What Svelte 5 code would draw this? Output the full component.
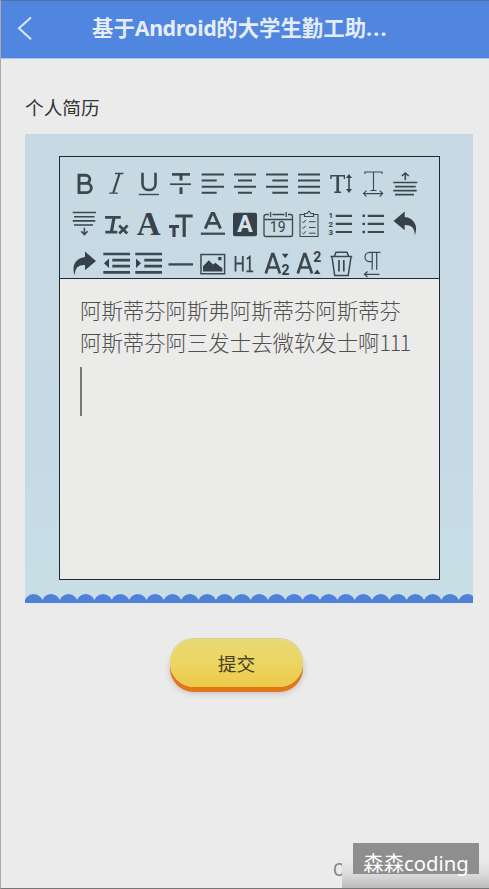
<script>
  const latin = 'Roboto, "Liberation Sans", sans-serif';
  const serif = '"Liberation Serif", serif';
  const scallops = Array.from({ length: 26 }, (_, i) => i * 17.35);

  // Each tool is a list of strokes (s), fills (f) and glyphs (t) on a 32x40 cell.
  const s = (d, w = 2) => ({ kind: 's', d, w });
  const f = (d) => ({ kind: 'f', d });
  const t = (text, x, y, size, o = {}) => ({ kind: 't', text, x, y, size, ...o });

  const tools = [
    { name: 'bold', p: [s('M11 11.2h6.700a4.100 4.100 0 0 1 0 8.200H11zM11 19.400h7.700a4.600 4.600 0 0 1 0 9.200H11z', 2.900)] },
    { name: 'italic', p: [s('M19.400 10l-6.200 19', 2.200), s('M15 9.500h8.400M9.300 29.200h8.500', 1.300)] },
    { name: 'underline', p: [s('M10.500 8.700v11c0 8.400 13 8.400 13 0V8.700', 2.600), s('M6.800 30.500H27', 1.400)] },
    { name: 'strike', p: [s('M8 10.400h18', 2.600), s('M17 10v6.600M17 23.300V30', 3), s('M6 20.200h21', 1.700)] },
    { name: 'left', p: [s('M5.700 10.500H28M5.700 16.600h15M5.700 22.700H28M5.700 28.800h15')] },
    { name: 'center', p: [s('M6 10.500h22M10 16.600h14M6 22.700h22M10 28.800h14')] },
    { name: 'right', p: [s('M6 10.500h22M12.300 16.600H28M6 22.700h22M12.300 28.800H28')] },
    { name: 'justify', p: [s('M6 10.500h22M6 16.600h22M6 22.700h22M6 28.800h22')] },
    { name: 'line-height', p: [s('M7 15v-3.300h13.400V15M10.300 28.300h6.800', 1.400), s('M13.700 12v16', 2.700), s('M25 12v15', 1.600), f('M22 14l3-4 3 4zM22 25l3 4 3-4z')] },
    { name: 'letter-spacing', p: [s('M9 10V8h17v2M17.500 8v18.500M14.500 26.500h6M7.500 29.600h19M10.500 26.600l-3 3 3 3M23.700 26.600l3 3-3 3', 1.100)] },
    { name: 'space-top', p: [s('M5.300 18.500h24M7 22.600h20.700M5.300 26.600h23.400M7 30.700h19', 1.700), s('M17.300 16V9.500M13.800 12l3.500-3 3.500 3', 1.600)] },

    { name: 'space-bottom', p: [s('M4.700 8.500H28M6 12.700h20.500M4.700 16.900h22.600M6 21h19', 1.600), s('M16.400 23.700v6.700M13.200 27.200l3.200 3.400 3.200-3.400', 1.500)] },
    { name: 'clear', p: [s('M5 13.300h15.700M5.300 28.100h12', 2.800), s('M14 13.500l-2.600 14.500', 3.200), s('M19.200 21.500l8 8M27.600 21.500l-8.400 8', 2.700)] },
    { name: 'font', p: [t('A', 16.700, 31, 33, { fam: serif, bold: true })] },
    { name: 'size', p: [s('M11.200 12h17.500M5 22.500h10', 3), s('M20.200 12v21M10 22.500V33', 3.200)] },
    { name: 'color', p: [s('M9.200 24.700L16 9.500h1.700l6.800 15.200M12 19.400h9.800', 2.900), s('M4.800 29.700H29', 2.200)] },
    { name: 'background', p: [f('M7 8.700h20a2 2 0 0 1 2 2v19.500a2 2 0 0 1-2 2H7a2 2 0 0 1-2-2V10.700a2 2 0 0 1 2-2z'), t('A', 16.900, 28, 23, { fam: latin, bold: true, light: true })] },
    { name: 'date', p: [s('M6.500 10.500h2.500M12.500 10.500h12M28 10.500h2.500q2 0 2 2V30.500q0 2-2 2H6q-2 0-2-2V12.500q0-2 2.500-2M4 15.500h28.500M10.600 8v5M26.200 8v5', 1.300), t('19', 17.700, 28.300, 14, { fam: latin })] },
    { name: 'check-list', p: [s('M12.500 10.500H8v22h18v-22h-4.500M12.500 12.500V9.500h2.500l2-2.300 2 2.300h2.500v3z', 1.100), s('M10.300 17.500l1.300 1.200 2.200-2.700M10.300 23.200l1.300 1.200 2.200-2.700M10.300 28.800l1.300 1.200 2.200-2.700M17 17.700h6.500M17 23.500h6.500M17 29.200h6.500', 1)] },
    { name: 'ordered', p: [s('M11.700 11.800H28M11.700 19.900H28M11.700 28H28', 2.200), t('1', 6.700, 14, 8, { fam: latin, bold: true }), t('2', 6.700, 22.700, 8, { fam: latin, bold: true }), t('3', 6.700, 31, 8, { fam: latin, bold: true })] },
    { name: 'bullet', p: [s('M11.700 11.800H28M11.700 19.900H28M11.700 28H28', 2.200), s('M6.500 11.800H9M6.500 19.900H9M6.500 28H9', 2.400)] },
    { name: 'undo', p: [f('M5.500 17L16.700 7.500v5.400C25 13.600 31 21 26.800 31.500 27 23.500 23 20.800 16.700 20.900v5.400z')] },

    { name: 'redo', p: [f('M28 17L17 7.500v5.400C8.500 13.600 2.800 21 6.800 31.500 6.800 23.500 10.700 20.800 17 20.900v5.400z')] },
    { name: 'outdent', p: [s('M3.300 10H30M12.300 16.200H30M12.300 22.200H30M3.300 28.400H30', 2.700), f('M9 14.500v9.400L4 19.200z')] },
    { name: 'indent', p: [s('M3.300 10H30M12.300 16.200H30M12.300 22.200H30M3.300 28.400H30', 2.700), f('M4 14.500v9.400l5-4.700z')] },
    { name: 'divider', p: [s('M4.500 20.400H29', 2.300)] },
    { name: 'image', p: [s('M5 10.500h23.600v19.200H5z', 1.500), f('M7 27.500v-5.200l5.800-6 4.300 4.200 2.300-1.800 7 5.500v3.300zM22.200 13h3.300v3.200h-3.300z')] },
    { name: 'heading', p: [s('M7.500 12v15.500M14.800 12v15.500M7.500 19.500h7.300M18.800 15l3-2.300V27M18.500 27.300h6.700', 1.800)] },
    { name: 'subscript', p: [s('M5.800 29.500L12.300 10h1l6.700 19.500M8 23.500h9.700', 2.700), f('M21.800 9.700h6.700l-3.300 4.600z'), t('2', 25.500, 31, 14, { fam: latin, bold: true })] },
    { name: 'superscript', p: [s('M5.800 29.500L12.300 10h1l6.700 19.500M8 23.500h9.700', 2.700), f('M21.800 30h6.700l-3.300-4.600z'), t('2', 25.300, 17.800, 14, { fam: latin, bold: true })] },
    { name: 'trash', p: [s('M6.500 12.500h21.700M10.500 12l1.500-3.700h11l1.500 3.700M8 13l2.700 18.500h13.500L27 13', 1.500), s('M15 16v11.500M19.800 16v11.500', 1.700)] },
    { name: 'direction', p: [s('M24.500 8.300H13.700a4.700 4.700 0 0 0 0 9.400h2.500M16.200 8.300v17.500M20.700 8.300v17.500M8.500 30.300h15M11.500 27.500l-3 2.800 3 2.800', 1.200)] }
  ];
</script>

<div class="page">
  <header>
    <svg class="back" width="16" height="26" viewBox="0 0 16 26"><path d="M14 2.500L2 13.300l12 10.900" /></svg>
    <h1>基于<span class="en">Android</span>的大学生勤工助<span class="dots">...</span></h1>
  </header>

  <main>
    <div class="label">个人简历</div>
    <section class="card">
      <div class="editor">
        <div class="toolbar">
          {#each tools as tool (tool.name)}
            <svg class="tool" width="32" height="40" viewBox="0 0 32 40" aria-label={tool.name}>
              {#each tool.p as p}
                {#if p.kind === 's'}
                  <path class="stroke" d={p.d} stroke-width={p.w} />
                {:else if p.kind === 'f'}
                  <path class="fill" d={p.d} />
                {:else}
                  <text class:light={p.light} x={p.x} y={p.y} font-size={p.size} font-family={p.fam} font-weight={p.bold ? 700 : 400} text-anchor="middle">{p.text}</text>
                {/if}
              {/each}
            </svg>
          {/each}
        </div>
        <div class="content">
          <p>阿斯蒂芬阿斯弗阿斯蒂芬阿斯蒂芬</p>
          <p>阿斯蒂芬阿三发士去微软发士啊<span class="digits">111</span></p>
          <span class="caret"></span>
        </div>
      </div>
      <svg class="wave" width="448" height="9" viewBox="0 0 448 9">
        <rect y="6" width="448" height="3" />
        {#each scallops as x}
          <circle cx={x + 8.7} cy="9.400" r="9.300" />
        {/each}
      </svg>
    </section>
    <button>提交</button>
  </main>

  <span class="credit">C</span>
  <div class="shade"></div>
  <div class="watermark">森森coding</div>
</div>

<style>
  .page {
    position: relative;
    box-sizing: border-box;
    width: 489px;
    height: 889px;
    overflow: hidden;
    background: #ebebeb;
    border-left: 1px solid #aaa;
    border-bottom: 1px solid #777;
    font-family: "Noto Sans", "Noto Sans CJK SC", sans-serif;
  }
  header {
    box-sizing: border-box;
    height: 58px;
    display: flex;
    align-items: center;
    padding: 0 0 4px 16px;
    background: #5085e0;
    border-top: 1px solid #4d70ad;
    box-shadow: 0 1px #a9c6ee;
  }
  .back path {
    fill: none;
    stroke: #dce8f8;
    stroke-width: 2;
  }
  h1 {
    margin: 0 0 0 59px;
    font: 700 21.400px/30px "Noto Sans", "Noto Sans CJK SC", sans-serif;
    color: #e4ecf5;
    white-space: nowrap;
  }
  .en {
    letter-spacing: -0.450px;
  }
  .dots {
    letter-spacing: 1.200px;
  }
  main {
    display: flex;
    flex-direction: column;
    padding: 35px 16px 0 24px;
  }
  .label {
    height: 41px;
    font: 18.700px/27px "Noto Sans CJK SC", sans-serif;
    color: #333;
  }
  .card {
    box-sizing: border-box;
    width: 448px;
    height: 469px;
    padding-top: 22px;
    display: flex;
    flex-direction: column;
    justify-content: space-between;
    background: linear-gradient(#c7dae4, #c6dae5 70%, #c8dfe5);
  }
  .editor {
    box-sizing: border-box;
    width: 381px;
    height: 424px;
    margin-left: 34px;
    border: 1.500px solid #202b31;
    display: flex;
    flex-direction: column;
  }
  .toolbar {
    box-sizing: border-box;
    height: 122px;
    padding: 7px 0 0 8px;
    display: flex;
    flex-wrap: wrap;
    align-content: flex-start;
    border-bottom: 1px solid #202b31;
  }
  .tool {
    display: block;
    overflow: visible;
  }
  .stroke {
    fill: none;
    stroke: #3c474f;
  }
  .fill, text {
    fill: #374149;
  }
  text.light {
    fill: #d4e3ea;
  }
  .content {
    flex: 1;
    padding: 15px 20px;
    background: #ebebe9;
    font: 300 21.400px/32px "Noto Sans CJK SC", sans-serif;
    color: #505050;
  }
  p {
    margin: 0;
    white-space: nowrap;
  }
  .digits {
    letter-spacing: -1.300px;
  }
  .caret {
    display: block;
    width: 1.500px;
    height: 49px;
    margin-top: 9px;
    background: #777;
  }
  .wave {
    display: block;
    fill: #5080da;
  }
  button {
    width: 133px;
    height: 48px;
    margin: 36px 0 0 145px;
    padding: 0 0 1px;
    border: 0;
    border-radius: 27px;
    background: linear-gradient(#e9da76, #ebd35e 60%, #ecca48);
    box-shadow: 0 5px #e27718, 0 6px 6px #0003, 0 -1px #d5cf91;
    font: 18.700px/45px "Noto Sans CJK SC", sans-serif;
    color: #453e20;
  }
  .credit {
    position: absolute;
    left: 332px;
    top: 858px;
    font: 18px/24px Roboto, sans-serif;
    color: #858585;
  }
  .shade {
    position: absolute;
    left: 341px;
    top: 843px;
    width: 147px;
    height: 46px;
    background: linear-gradient(#ebebeb 35%, #d9d9d9 70%, #b8b8b8);
  }
  .watermark {
    position: absolute;
    left: 352px;
    top: 843px;
    width: 126px;
    height: 31px;
    background: #8e8e8e;
    color: #fff;
    font: 20.300px/40px "Noto Sans", "Noto Sans CJK SC", sans-serif;
    text-align: center;
    white-space: nowrap;
  }
</style>
